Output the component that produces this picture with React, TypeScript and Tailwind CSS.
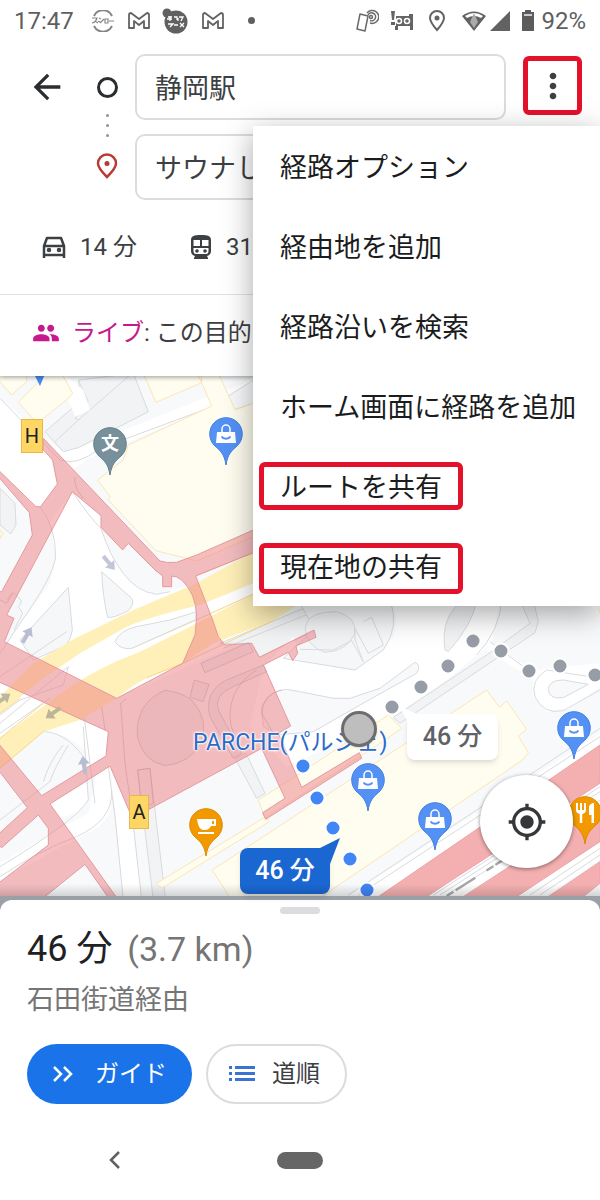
import React from 'react';
import { MdArrowBack, MdMoreVert, MdPeople, MdMyLocation, MdRestaurant } from 'react-icons/md';

const menuItems = [
  { label: '経路オプション', box: 'border-transparent pt-1' },
  { label: '経由地を追加', box: 'border-transparent pt-1' },
  { label: '経路沿いを検索', box: 'border-transparent pt-1' },
  { label: 'ホーム画面に経路を追加', box: 'border-transparent pt-1' },
  { label: 'ルートを共有', box: 'h-12 border-[#e4112b] pt-1' },
  { label: '現在地の共有', box: 'mt-1 h-[51px] border-[#e4112b]' },
];

// Route dots, centre coordinates on the map canvas
const greyDots = [
  [392, 707], [421, 687], [448, 666], [473, 641], [501, 651], [529, 671], [560, 666], [595, 675],
];
const blueDots = [
  [303, 766], [317, 798], [333, 828], [350, 859], [367, 890],
];

type PinProps = { x: number; y: number; color: string; edge: string; children?: React.ReactNode };

const Pin: React.FC<PinProps> = ({ x, y, color, edge, children }) => (
  <g transform={`translate(${x} ${y})`}>
    <path
      d="M0 31C-1.500 20-6 16.500-11 12A16.300 16.300 0 1 1 11 12C6 16.500 1.500 20 0 31Z"
      fill={color}
      stroke={edge}
    />
    {children}
  </g>
);

const ShopPin: React.FC<{ x: number; y: number }> = ({ x, y }) => (
  <Pin x={x} y={y} color="#5491f5" edge="#4380e0">
    <path d="M-9-2H9L10 9H-10Z" fill="#fff" />
    <path d="M-4-2V-5a4 4 0 0 1 8 0v3" fill="none" stroke="#fff" strokeWidth="1.500" />
    <path d="M-4.500 2.500a5 4 0 0 0 9 0" fill="none" stroke="#5491f5" strokeWidth="1.800" />
  </Pin>
);

const RoadArrow: React.FC<{ x: number; y: number; angle: number; color: string }> = ({ x, y, angle, color }) => (
  <path
    d="M-9-2H1V-6L9 0L1 6V2H-9Z"
    transform={`translate(${x} ${y}) rotate(${angle})`}
    fill={color}
  />
);

const MapCanvas: React.FC = () => (
  <svg
    className="block h-full w-full"
    viewBox="0 376 600 520"
    preserveAspectRatio="xMidYMid slice"
    aria-hidden="true"
  >
    <rect y="370" width="600" height="530" fill="#f8f9fa" />

    <g transform="scale(0.33333) translate(0 1110)" strokeWidth="3" strokeLinejoin="round">
      {/* streets */}
      <g fill="#fff">
        <path d="M0 85L130 195L172 342L120 410H100L0 305Z" />
        <path d="M130 200L185 243L235 235L620 82L760 30V60L632 112L260 268L215 305Z" />
        <path d="M217 365L303 437V475Q330 560 370 610Q410 665 470 673L600 640L760 560V800L350 985L20 820L150 640L167 560L150 455Z" />
        <path d="M0 937L325 1085L318 1158L265 1190L255 1140L200 1100L130 1085L0 1195Z" />
        <path d="M330 1188L350 1360L370 1590H425L395 1340Z" />
        <path d="M150 1302L262 1240L265 1290Q240 1340 175 1340Z" />
        <path d="M290 1210L330 1188L335 1290Q330 1350 290 1375L0 1530V1480L190 1370L265 1330Z" />
      </g>

      {/* grey blocks */}
      <g fill="#f1f3f4" stroke="#d8dbdf">
        <path d="M235 30L400 10L445 125L235 233L190 245L135 185L245 90Z" />
        <path d="M0 355L45 400L48 465L32 492L0 465Z" />
        <path d="M675 85L760 30V100L706 118Z" fill="#f8f9fa" />
        <path d="M235 30L265 95L225 145L235 150L390 15M165 215L235 150" fill="none" />
        <path d="M190 10L250 60L270 120L225 140L205 90" fill="#fff" stroke="none" />
        <path d="M305 605L395 685Q405 700 385 722Q340 745 323 742Q308 680 305 605Z" fill="#f6f7f9" />
        <path d="M205 652L217 780Q210 820 190 830L100 870L60 810Z" fill="#f6f7f9" />
        <path d="M20 690L38 667L63 690V700L55 710L68 730L42 780" fill="#f6f7f9" />
        <path d="M413 1200L450 1195L497 1590H460Z" />
        <path d="M705 1165L738 1150L795 1270L770 1285Z" />
        <path d="M660 820L910 715L1000 700L960 775L778 862L755 820Z" />
        <path d="M670 835L930 730" fill="none" />
      </g>
      <g fill="none" stroke="#d8dbdf">
        <path d="M0 85L180 270Q230 290 300 235L632 112" />
        <path d="M120 410Q167 470 167 560Q160 620 60 760L0 850" />
        <path d="M217 365Q275 450 303 475Q330 560 370 610Q410 665 470 673L510 665" />
        <path d="M0 920L200 785M0 1060L205 890L190 945L60 990L0 1035M0 1090L150 985" />
        <path d="M190 1045L250 1020L285 1300M250 1070L265 1290Q230 1350 0 1490" />
        <path d="M120 1085Q190 1080 250 1160M205 1125Q160 1200 150 1235L0 1350M190 1125Q150 1170 130 1235" />
        <path d="M325 1190L345 1340L370 1590M395 1320L425 1590" />
        <path d="M0 1520Q120 1440 230 1400Q340 1350 335 1260" />
      </g>

      {/* pale yellow buildings */}
      <g fill="#fffdf0" stroke="#fbe6b4">
        <path d="M0 35L35 75L80 35V10H0Z" />
        <path d="M55 97L135 15L185 10L218 70L205 85L112 160Z" />
        <path d="M430 10L468 97L605 38L590 10Z" />
        <path d="M655 10L706 120L760 100V500L590 573L468 542L325 390L330 380L293 330L370 270L385 225L635 108L605 38V10Z" />
        <path d="M0 505L10 490L0 480Z" />
        <path d="M470 1540L485 1555L808 1355L797 1340Z" />
      </g>

      {/* expressway */}
      <g fill="#fff0b9">
        <path d="M0 980L100 880L220 808L400 720L590 640L760 545V640L600 705Q450 740 380 770L240 850L130 925L0 1030Z" />
        <path d="M0 1105L210 950Q300 890 420 845L600 755L760 672L900 620V700L820 752L640 820L540 885L440 925Q390 950 350 985L240 1050L130 1085L0 1195Z" />
      </g>
      <g fill="none" stroke="#f6d786">
        <path d="M587 618L760 548M395 835L600 745L760 672M440 923L548 880L820 752" />
        <path d="M0 1105L130 1000M0 1195L130 1085M0 1030L60 985" />
      </g>
      <path d="M345 815Q360 780 410 770L510 750L590 725L585 750L395 835Q360 840 345 815Z" fill="#f8f9fa" stroke="#d8dbdf" />
    </g>

    <g transform="scale(0.33333) translate(900 1800)" strokeWidth="3" strokeLinejoin="round">
      <g fill="#fff">
        <path d="M-110 200L-20 110L0 165L160 210L280 110Q300 50 270 0H600L575 130L440 240L280 350L-40 500L-150 380Z" />
        <path d="M570 125L700 215L740 205L900 190V260L810 325L740 335L700 290V240L560 150Z" />
        <path d="M150 885L900 400V780L740 885Z" />
      </g>
      <g fill="#f1f3f4" stroke="#d8dbdf">
        <path d="M45 90L0 10L30 0H270Q300 80 250 150L165 210L-50 175L-20 145Z" fill="#f6f7f9" />
        <path d="M20 70Q30 35 110 35Q170 50 165 100Q140 155 75 157Q20 140 15 85Z" />
        <path d="M190 65L215 52L250 135L205 160L165 85V120L190 185L155 122L100 150L0 148" fill="none" />
        <path d="M435 150Q420 50 490 0H530Q520 70 445 155Z" />
        <path d="M280 352L560 165L690 70L660 0H700L715 65L705 98L300 370Z" />
        <path d="M-40 268L0 275L100 295L150 295L240 265L345 187Q365 195 350 220L180 315L40 395L-65 405L-110 380L-115 320Q-90 270 -40 268Z" fill="#f8f9fa" />
        <path d="M745 265Q750 240 790 240L865 253L790 293Q745 300 745 265Z" fill="#f8f9fa" />
      </g>
      <g fill="none" stroke="#d8dbdf">
        <path d="M605 0Q600 90 530 165M570 125L690 215M740 210L900 235M740 210Q690 240 705 290Q730 345 790 332L900 270" />
        <path d="M145 885L900 385M175 885L900 410M400 885L900 560M420 885L900 575M440 885L900 600M690 885L900 745M720 885L900 765" />
      </g>
      <g fill="#fffdf0" stroke="#fbe6b4">
        <path d="M560 270L598 322L620 303L680 388L655 408L685 458L668 480L50 900H-205L-263 810L0 638Z" />
        <path d="M265 345L305 385L240 430L-105 655L-125 600L0 520Z" />
      </g>
      <g fill="#f4b0b1" stroke="#eca5a7">
        <path d="M235 890L900 435V550L380 890Z" />
        <path d="M490 890L900 622V725L650 890Z" />
        <path d="M745 890L900 785V850L850 890Z" />
      </g>
      <path d="M440 888L700 722" stroke="#a5a7a9" strokeWidth="7" strokeDasharray="24 8 70 40" />
      <path d="M890 0L900 40" stroke="#fbe6b4" />
    </g>

    {/* station concourse and pedestrian decks */}
    <g transform="scale(0.33333) translate(0 1110)" strokeWidth="3" strokeLinejoin="round">
      <path
        fill="#ec787d"
        fillOpacity="0.47"
        stroke="#e59a9e"
        fillRule="evenodd"
        d="M130 205L480 573Q500 580 530 577L590 555L760 480V548L587 618L638 750L655 800L675 825L755 820L778 862L942 780L948 802L888 828L893 850L878 872L865 847L790 885L872 1068L835 1090L905 1252L1078 1148L1085 1165L797 1348L788 1328L855 1285L785 1135L447 1318L395 1340L330 1188L150 1302L355 1590H330L255 1483L110 1600H-5V1540L145 1425V1375L115 1335L5 1433L-5 1425V1393L82 1313L-5 1200V1120L125 1277L318 1158L325 1085L-5 935V665H5L97 495L88 428L-5 320V300L108 410H122L172 342L158 270L130 240Z
           M217 365L20 735L42 745L13 815L350 985L548 880L585 795L590 740Q588 670 545 630Q530 618 515 618V650H488V618L465 600L385 520L368 540L303 472V437Z"
      />
      <g fill="#cf9aa2" fillOpacity="0.14" stroke="#c98f96" strokeOpacity="0.5">
        <path d="M495 961Q540 965 575 990Q630 1050 602 1120Q570 1180 495 1187Q430 1175 412 1100Q405 1000 495 961Z" />
        <path d="M583 930L627 943L610 995L570 982Z" />
        <path d="M603 880L615 908L760 845L745 818Z" />
        <path d="M790 885L680 930Q610 965 630 1040L700 1165L725 1150L655 1020Q640 975 700 950L800 905Z" />
        <path d="M362 1000L380 985M305 1010L315 1080M362 1000L375 1180L395 1320M413 1200L450 1195L460 1300L425 1315Z" fill="none" />
        <path d="M770 900Q690 950 690 1040Q690 1090 735 1140M845 960Q790 970 785 1030L820 1090" fill="none" />
        <path d="M225 320Q220 350 250 385M0 690L20 700L38 670" fill="none" />
      </g>
    </g>

    <RoadArrow x={109} y={563} angle={50} color="#c3c6da" />
    <RoadArrow x={27} y={635} angle={-60} color="#b9bdd4" />
    <RoadArrow x={3} y={699} angle={-35} color="#bdb7a0" />
    <RoadArrow x={53} y={713} angle={145} color="#bdb59a" />
    <RoadArrow x={84} y={765} angle={-98} color="#b9bdd4" />

    {greyDots.map(([x, y]) => (
      <circle key={x} cx={x} cy={y} r="7.500" fill="#979da7" stroke="#fff" strokeWidth="2" />
    ))}
    {blueDots.map(([x, y]) => (
      <circle key={x} cx={x} cy={y} r="7.500" fill="#4285f4" stroke="#fff" strokeWidth="2" />
    ))}

    <path d="M34 374H45L40 386Z" fill="#4a8af4" />
    <Pin x={110} y={444} color="#78909c" edge="#607d8b" />
    <ShopPin x={226} y={434} />
    <ShopPin x={574} y={728} />
    <ShopPin x={368} y={780} />
    <ShopPin x={435} y={819} />
    <Pin x={206} y={825} color="#f29900" edge="#dd8a00">
      <path d="M-9-6H10V1H5Q3 5-1 5H-3Q-8 4-9-6Z" fill="#fff" />
      <path d="M6-4H8V-1H6Z" fill="#f29900" />
      <path d="M-8 7H8V9H-8Z" fill="#fff" />
    </Pin>
    <Pin x={585} y={813} color="#f29900" edge="#dd8a00">
      <MdRestaurant x={-12} y={-12} size={24} color="#fff" />
    </Pin>
  </svg>
);

const MailIcon: React.FC = () => (
  <svg className="ml-3.5" width="22" height="18" viewBox="0 0 22 18" fill="none" stroke="#636363" strokeWidth="1.800">
    <path d="M1 16V3Q1 1 3 1L11 7L19 1Q21 1 21 3V16H16V9L11 13L6 9V16Z" strokeLinejoin="round" />
  </svg>
);

const StatusBar: React.FC = () => (
  <div className="flex h-10 items-center justify-between px-3.5 pt-px font-['Roboto',sans-serif] text-2xl text-[#5f5f5f]">
    <div className="flex items-center">
      <span className="w-[58px]">17:47</span>
      <svg className="ml-5" width="22" height="22" viewBox="0 0 22 22" fill="none" stroke="#858585" strokeWidth="2">
        <path d="M2 6A10 10 0 0 1 20 6M2 16A10 10 0 0 0 20 16" />
        <path d="M0 8H5Q4 12 0 13M3 11L6 13M7 8L9 9M6 11L8 12M8 13L12 9M13 9H16V13H13ZM17 11H22" strokeWidth="1.200" />
      </svg>
      <MailIcon />
      <svg className="ml-3" width="26" height="26" viewBox="0 0 26 26" fill="#606060">
        <circle cx="5" cy="5" r="4.500" />
        <circle cx="14" cy="14" r="11.500" />
        <path d="M6 9H10M8 8V13M5 11H10M12 9H15V12M17 9H21L19 13M16 10V13M6 16H11L8 19M12 17H16M18 15L22 19M18 19L22 15" stroke="#fff" strokeWidth="1.300" fill="none" />
      </svg>
      <MailIcon />
      <span className="ml-6 h-[7px] w-[7px] rounded-full bg-[#5f5f5f]" />
    </div>
    <div className="flex items-center">
      <svg width="24" height="24" viewBox="0 0 24 24" fill="none" stroke="#6a6a6a" strokeWidth="1.500">
        <path d="M5 5L13 7L10 22L2 20Z" strokeLinejoin="round" />
        <path d="M12 4A6.500 6.500 0 1 1 15 14M13 6A4 4 0 1 1 15 11.500" />
        <circle cx="16" cy="8" r="1.500" />
      </svg>
      <svg className="ml-3" width="22" height="20" viewBox="0 0 22 20" fill="#646464">
        <path d="M0 0H4L3 9H1ZM0 11H4V14H0ZM5 5H18V3H22V19H19V15H7V19H4V15H5Z" />
        <circle cx="8" cy="10" r="2.500" fill="#666" stroke="#fff" strokeWidth="1.500" />
        <circle cx="16" cy="10" r="2.500" fill="#666" stroke="#fff" strokeWidth="1.500" />
      </svg>
      <svg className="ml-4" width="16" height="22" viewBox="0 0 16 22" fill="none" stroke="#646464" strokeWidth="2">
        <path d="M8 20Q1 12 1 8A7 7 0 0 1 15 8Q15 12 8 20Z" />
        <circle cx="8" cy="8" r="2.500" fill="#646464" stroke="none" />
      </svg>
      <svg className="ml-4" width="26" height="22" viewBox="0 0 26 22">
        <path d="M1 6Q13-3 25 6L13 21Z" fill="#626262" />
        <path d="M4 6Q13 0 22 6L20 8Q13 4 6 8Z" fill="#fff" />
        <path d="M13 3L17 12L13 18L9 12Z" fill="#aaa" />
      </svg>
      <svg className="ml-0.5" width="22" height="22" viewBox="0 0 22 22">
        <path d="M1 21L21 1V21Z" fill="#626262" />
      </svg>
      <svg className="ml-2.5" width="14" height="22" viewBox="0 0 14 22">
        <path d="M4 0H10V2H13V21H1V2H4Z" fill="#5c5c5c" />
        <path d="M3 4H11V6H3Z" fill="#ccc" />
      </svg>
      <span className="ml-1.5">92%</span>
    </div>
  </div>
);

const OverflowMenu: React.FC = () => (
  <div
    role="menu"
    className="absolute right-0 top-[126px] z-20 w-[347px] bg-white shadow-[0_8px_28px_rgba(0,0,0,0.35)]"
  >
    {menuItems.map((item) => (
      <button
        key={item.label}
        type="button"
        role="menuitem"
        className="flex h-20 w-full items-center pl-1.5 text-left text-[27px] leading-none text-[#1b1c1e]"
      >
        <span className={`flex items-center rounded-md border-[5px] px-4 whitespace-nowrap ${item.box}`}>
          {item.label}
        </span>
      </button>
    ))}
  </div>
);

const App: React.FC = () => (
  <div className="relative overflow-hidden bg-white font-['Roboto','Noto_Sans_CJK_JP',sans-serif] text-[#3c4043]">
    {/* Directions header */}
    <header className="relative z-10 bg-white shadow-[0_2px_4px_rgba(0,0,0,0.3)]">
      <StatusBar />
      <div className="flex pt-3.5">
        <button type="button" aria-label="戻る" className="ml-[27px] flex h-[66px] w-10 items-center justify-center text-[#2b2e31]">
          <MdArrowBack size={40} />
        </button>
        <div className="ml-6 flex w-8 flex-col items-center pt-[23px]">
          <span className="h-[21px] w-[21px] rounded-full border-[3px] border-[#2b2e31]" />
          <span className="mt-4 flex flex-col gap-[7px]">
            <i className="block h-[3px] w-[3px] rounded-full bg-[#909498]" />
            <i className="block h-[3px] w-[3px] rounded-full bg-[#909498]" />
            <i className="block h-[3px] w-[3px] rounded-full bg-[#909498]" />
          </span>
          <svg className="mt-4" width="22" height="26" viewBox="0 0 22 26" fill="none" stroke="#b93a32" strokeWidth="2.500">
            <path d="M11 24C5 18 2 14 2 10.500A9 9 0 0 1 20 10.500C20 14 17 18 11 24Z" />
            <circle cx="11" cy="10.500" r="2.500" fill="#b93a32" stroke="none" />
          </svg>
        </div>
        <div className="ml-3 flex flex-1 flex-col gap-3.5">
          <input
            aria-label="出発地"
            defaultValue="静岡駅"
            className="h-[66px] w-full rounded-[10px] border-2 border-[#dadce0] px-[18px] pb-0.5 text-[27px] outline-none"
          />
          <input
            aria-label="目的地"
            defaultValue="サウナしきじ"
            className="h-[66px] w-full rounded-[10px] border-2 border-[#dadce0] px-[18px] pb-0.5 text-[27px] outline-none"
          />
        </div>
        <button
          type="button"
          aria-label="その他"
          className="ml-[17px] mr-[18px] mt-0.5 flex h-[59px] w-[59px] items-center justify-center rounded-md border-[5px] border-[#e4112b]"
        >
          <MdMoreVert size={40} className="shrink-0" />
        </button>
      </div>

      <div className="flex h-[95px] items-center border-b border-[#dfe1e4] pl-10 text-2xl">
        <button type="button" className="flex w-[148px] items-center gap-3">
          <svg width="28" height="28" viewBox="0 0 28 28" fill="none" stroke="#3c4043" strokeWidth="2.500">
            <path d="M4 13L7 5H21L24 13V22H4ZM4 13H24M4 21V25M24 21V25" strokeLinejoin="round" />
            <circle cx="9" cy="17" r="1" />
            <circle cx="19" cy="17" r="1" />
          </svg>
          14 分
        </button>
        <button type="button" className="flex items-center gap-3">
          <svg width="26" height="26" viewBox="0 0 26 26">
            <path
              fill="#3c4043"
              fillRule="evenodd"
              d="M13 1C20 1 23 2 23 6V17Q23 21 19 22L20 24V25H6V24L7 22Q3 21 3 17V6C3 2 6 1 13 1ZM5.500 6V12H12V6ZM14 6V12H20.500V6ZM5.500 14V17Q5.500 20 8 20H18Q20.500 20 20.500 17V14Z"
            />
            <circle cx="9" cy="17" r="1.800" fill="#3c4043" />
            <circle cx="17" cy="17" r="1.800" fill="#3c4043" />
          </svg>
          31
        </button>
      </div>

      <div className="flex h-[81px] items-center whitespace-nowrap pb-1.5 pl-8 text-2xl">
        <MdPeople size={28} className="mr-3 text-[#c5198d]" />
        <span className="text-[#c5198d]">ライブ</span>
        <span>: この目的</span>
      </div>
    </header>

    {/* Map */}
    <main className="relative h-[520px]">
      <MapCanvas />
      <span className="absolute left-[21px] top-[43px] flex h-[34px] w-[22px] items-center justify-center border border-[#e8b94a] bg-[#fdd663] text-xl text-[#202124]">
        H
      </span>
      <span className="absolute left-[129px] top-[419px] flex h-[34px] w-5 items-center justify-center border border-[#e8b94a] bg-[#fdd663] text-xl text-[#202124]">
        A
      </span>
      <span className="absolute left-[101px] top-[59px] text-lg leading-none font-bold text-white">文</span>
      <span className="absolute left-[193px] top-[353px] whitespace-nowrap text-[23px] leading-7 text-[#2b6bc9] [text-shadow:0_0_2px_#fff,0_0_2px_#fff,0_0_3px_#fff,0_0_3px_#fff]">
        PARCHE(パルシェ)
      </span>
      <span className="absolute left-[341px] top-[335px] h-9 w-9 rounded-full border-[3px] border-[#6d6d6d] bg-[#bebebe] shadow" />

      <div className="absolute left-[407px] top-[338px] flex h-[46px] w-[91px] items-center justify-center rounded-lg bg-white text-[25px] font-medium text-[#5f6368] shadow-md">
        <svg className="absolute -left-2 -top-2" width="20" height="16" viewBox="0 0 20 16">
          <path d="M0 0L20 9L9 16Z" fill="#fff" />
        </svg>
        46 分
      </div>

      <div className="absolute left-[240px] top-[472px] flex h-[46px] w-[90px] items-center justify-center rounded-lg bg-[#1a67d2] text-[25px] font-medium text-white shadow-md">
        <svg className="absolute -right-2.5 -top-2.5" width="22" height="26" viewBox="0 0 22 26">
          <path d="M0 11L22 0L12 26Z" fill="#1a67d2" />
        </svg>
        46 分
      </div>

      <button
        type="button"
        aria-label="現在地"
        className="absolute right-[27px] top-[399px] flex h-[93px] w-[93px] items-center justify-center rounded-full bg-white text-[#35383b] shadow-[0_1px_4px_rgba(0,0,0,0.45)]"
      >
        <MdMyLocation size={40} />
      </button>
      <div className="absolute inset-x-0 bottom-0 h-3 bg-linear-to-b from-transparent to-black/15" />
    </main>

    {/* Route summary sheet */}
    <section className="bg-[#9aa0a6] pt-1">
      <div className="rounded-t-xl bg-white px-[27px] pt-[7px]">
        <div className="mx-auto h-[7px] w-10 rounded-full bg-[#dadce0]" />
        <h1 className="mt-2.5 text-[36px] leading-[50px] text-[#202124]">
          46 分 <span className="ml-1.5 text-[34px] text-[#757575]">(3.7 km)</span>
        </h1>
        <p className="mt-1.5 text-[27px] leading-10 text-[#757575]">石田街道経由</p>
        <div className="mt-6 flex gap-3.5">
          <button
            type="button"
            className="flex h-[60px] w-[165px] items-center rounded-full bg-[#1a73e8] pl-6 text-2xl text-white"
          >
            <svg className="mr-5" width="24" height="24" viewBox="0 0 24 24" fill="none" stroke="currentColor" strokeWidth="2.500">
              <path d="M3 5L10 12L3 19M13 5L20 12L13 19" />
            </svg>
            ガイド
          </button>
          <button
            type="button"
            className="flex h-[60px] w-[141px] items-center rounded-full border-2 border-[#dadce0] pl-5 text-2xl"
          >
            <svg className="mr-4" width="28" height="18" viewBox="0 0 28 18" fill="#3b73d1">
              <path d="M1 1H4V4H1ZM1 7H4V10H1ZM1 13H4V16H1ZM7 1H27V4H7ZM7 7H27V10H7ZM7 13H27V16H7Z" />
            </svg>
            道順
          </button>
        </div>
      </div>
    </section>

    {/* System navigation */}
    <nav className="grid h-24 grid-cols-[1fr_46px_1fr] items-center bg-white pt-4">
      <button type="button" aria-label="戻る" className="ml-[108px] w-4">
        <svg width="14" height="20" viewBox="0 0 14 20" fill="none" stroke="#606060" strokeWidth="2.500">
          <path d="M11 2L3 10L11 18" />
        </svg>
      </button>
      <button type="button" aria-label="ホーム" className="h-[17px] rounded-full bg-[#666]" />
    </nav>

    <OverflowMenu />
  </div>
);

export default App;
